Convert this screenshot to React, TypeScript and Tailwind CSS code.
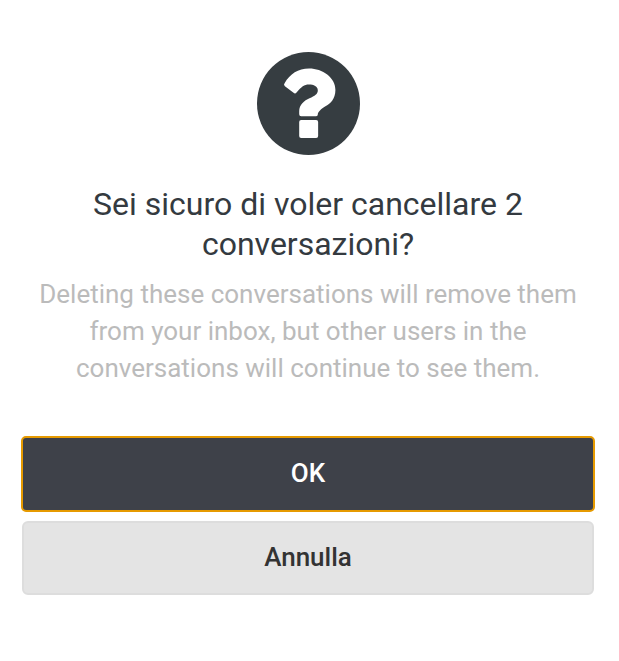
function QuestionIcon({ className }: { className?: string }) {
    return (
        <svg viewBox="0 0 310 310" fill="none" aria-hidden="true" className={className}>
            <circle cx="155" cy="155" r="155" fill="currentColor" />
            <g fill="#fff" transform="translate(-26 -23)">
                <path d="M109 117C126 89 149 73 183 73C223 73 262 100 262 137C262 165 246 178 232 186C219 194 209 203 209 211Q209 216 204 216H159Q153 216 153 210V201C153 182 168 169 184 162C200 155 209 150 209 138C209 127 197 121 182 121C168 121 160 128 145 145Q141 150 136 146L110 126Q105 122 109 117Z" />
                <rect x="153" y="228" width="57" height="54" rx="6" />
            </g>
        </svg>
    );
}

export default function App() {
    return (
        <main className="min-h-screen bg-white pt-[52px] pr-[25px] pb-16 pl-[22px] font-['Roboto',sans-serif]">
            <div role="alertdialog" aria-labelledby="title" aria-describedby="message" className="flex flex-col text-center">
                <QuestionIcon className="mx-auto size-[103px] text-[#363d41]" />

                <h1 id="title" className="mt-[29px] px-12 text-[32px] leading-10 text-[#343a40]">
                    Sei sicuro di voler cancellare 2 conversazioni?
                </h1>
                <p id="message" className="mt-3 px-2 text-[26px] leading-[37px] text-[#bbbbbb]">
                    Deleting these conversations will remove them from your inbox, but other users in the conversations will continue to see them.
                </p>

                <div className="mt-[50px] flex flex-col gap-[10px]">
                    <button
                        type="button"
                        className="h-[74px] rounded bg-[#3e4149] pb-0.5 text-[26px] font-medium text-white outline-2 -outline-offset-1 outline-[#e69a00]"
                    >
                        OK
                    </button>
                    <button
                        type="button"
                        className="h-[74px] rounded-md border-2 border-[#dddddd] bg-[#e4e4e4] pb-0.5 text-[26px] font-medium text-[#333333]"
                    >
                        Annulla
                    </button>
                </div>
            </div>
        </main>
    );
}
